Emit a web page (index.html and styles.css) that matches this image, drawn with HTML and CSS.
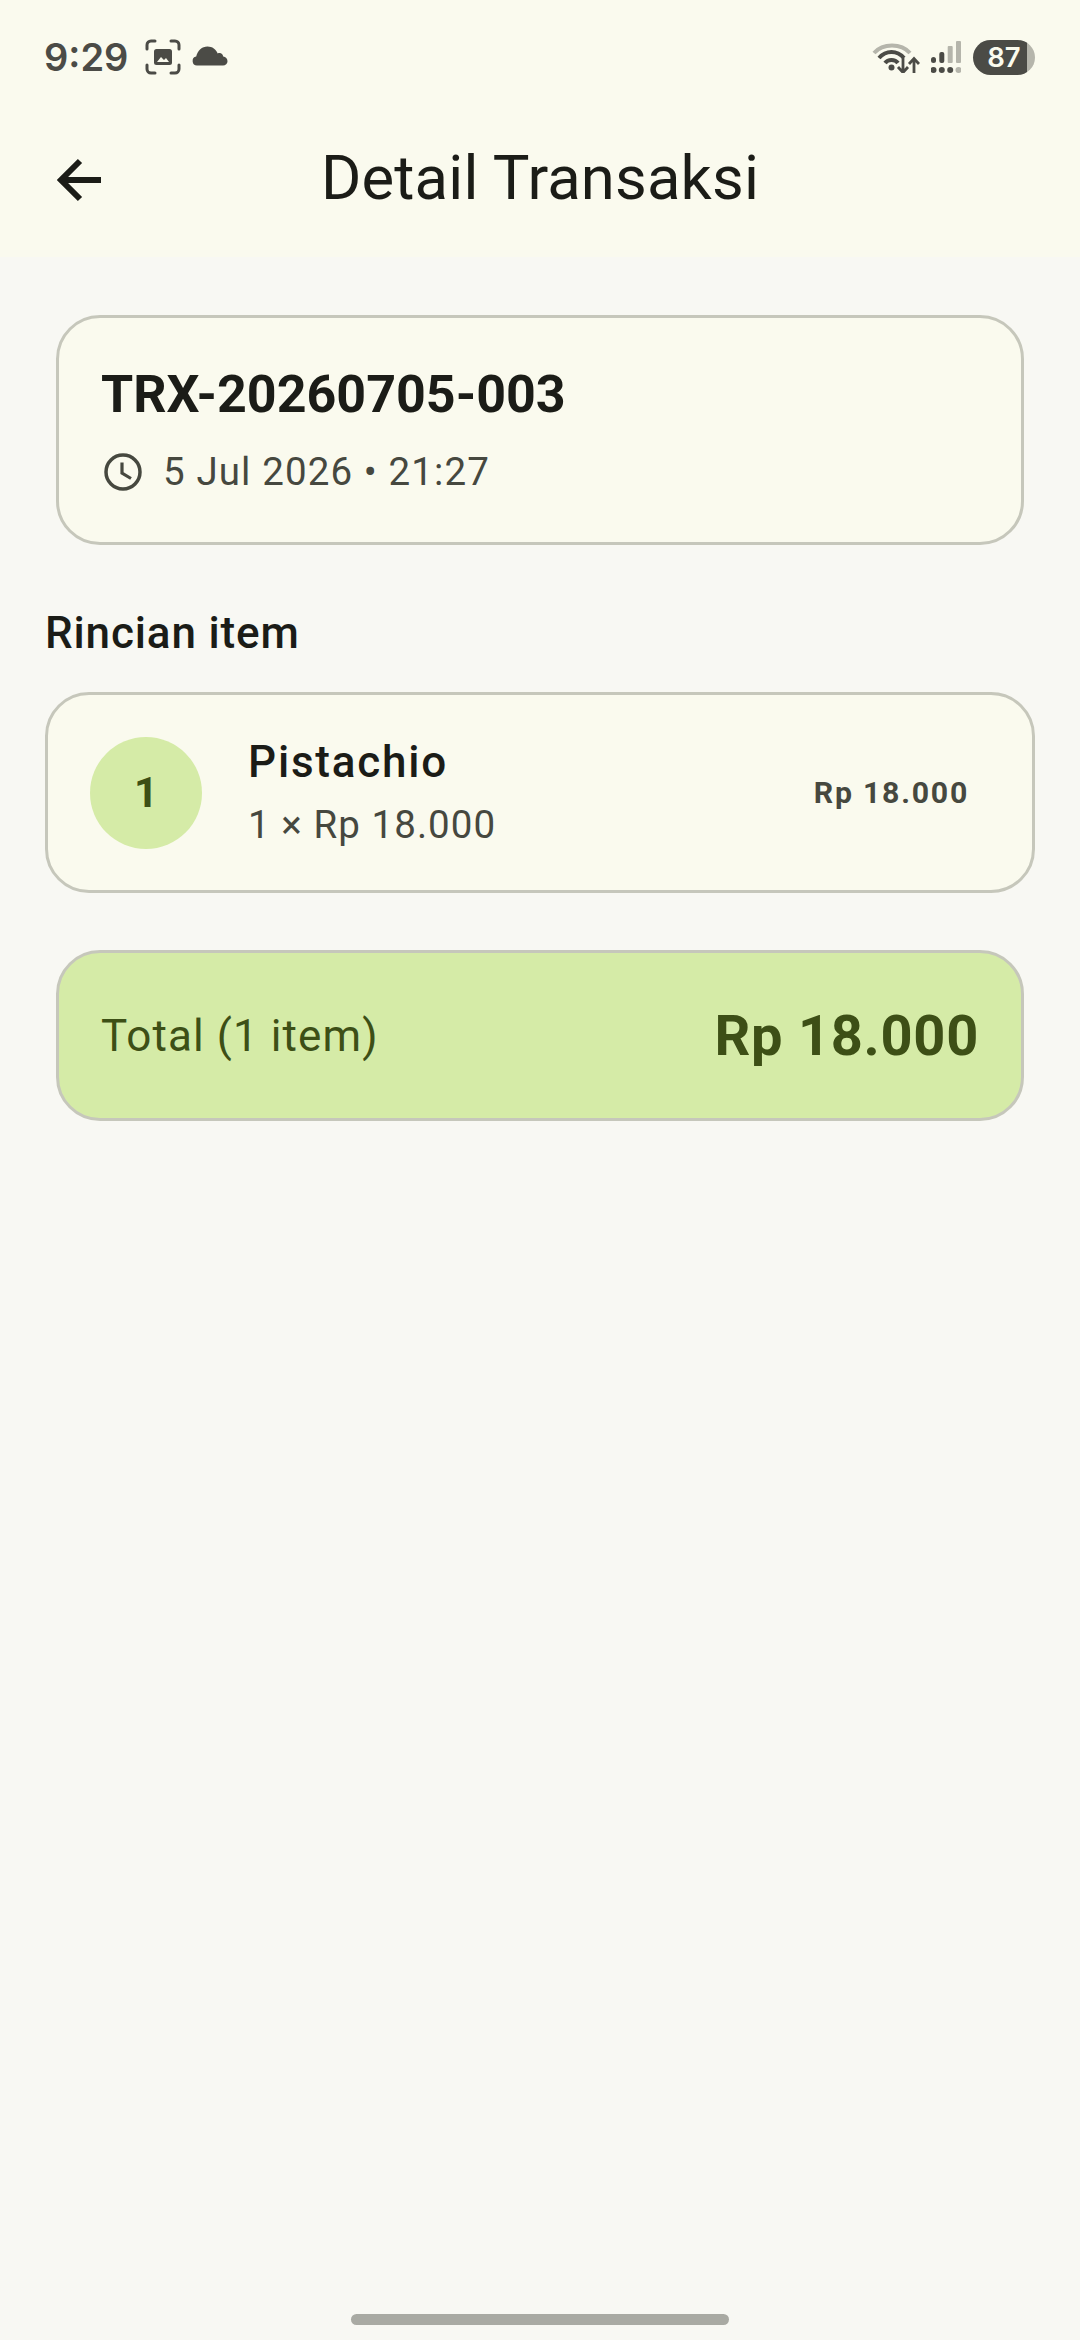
FILE: index.html
```html
<!DOCTYPE html>
<html lang="en">
<head>
  <meta charset="UTF-8" />
  <meta name="viewport" content="width=device-width, initial-scale=1.0"/>
  <title>Detail Transaksi</title>
  <link rel="stylesheet" href="styles.css">
</head>
<body>
  <div class="top">
    <div class="status-bar">
      <div class="status-left">
        <span class="clock">9:29</span>
        <svg class="ic-shot" viewBox="0 0 36 36" width="36" height="36">
          <path d="M2 10V6a4 4 0 0 1 4-4h4M26 2h4a4 4 0 0 1 4 4v4M34 26v4a4 4 0 0 1-4 4h-4M10 34H6a4 4 0 0 1-4-4v-4" fill="none" stroke="#4b4b46" stroke-width="3" stroke-linecap="round"/>
          <rect x="9" y="10" width="18" height="16" rx="2.5" fill="#4b4b46"/>
          <path d="M12 23l4-5 3 3 2-2 3 4z" fill="#fafaee"/>
        </svg>
        <svg class="ic-cloud" viewBox="0 0 36 20" width="36" height="20">
          <path d="M5 19.500a4.500 4.500 0 0 1-.8-8.900C5.500 4.500 10 .5 15.500.5c4.800 0 8.600 2.800 10.200 7 1-.5 2-.5 3-.2 1.500.5 2.300 1.700 2.500 3.200 2.500.4 4.300 2.300 4.300 4.700 0 2.500-2 4.300-4.500 4.300z" fill="#4b4b46"/>
        </svg>
      </div>
      <div class="status-right">
        <svg class="ic-wifi" viewBox="0 0 48 31" width="48" height="31">
          <path d="M2 11C11 1 29 1 38 11" fill="none" stroke="#b5b5ab" stroke-width="4"/>
          <path d="M7 16C14 8 25 8 32 16" fill="none" stroke="#4b4b46" stroke-width="4"/>
          <path d="M13 21C16 17 23 17 26 21" fill="none" stroke="#4b4b46" stroke-width="4"/>
          <circle cx="19.500" cy="25.500" r="3" fill="#4b4b46"/>
          <path d="M31 16v14M26 25l5 5.500 5-5.500M42 31V17M37 22l5-5.500 5 5.500" fill="none" stroke="#4b4b46" stroke-width="2.800"/>
        </svg>
        <svg class="ic-signal" viewBox="0 0 30 33" width="30" height="33">
          <rect x="0" y="16" width="5" height="6" rx="2.500" fill="#4b4b46"/>
          <rect x="8.300" y="11" width="5" height="11" rx="2" fill="#4b4b46"/>
          <rect x="16.700" y="5" width="5" height="17" rx="1" fill="#b5b5ab"/>
          <rect x="25" y="0" width="5" height="22" rx="1" fill="#b5b5ab"/>
          <circle cx="2.500" cy="29" r="3" fill="#4b4b46"/>
          <circle cx="10.800" cy="29" r="3" fill="#4b4b46"/>
          <circle cx="19.200" cy="29" r="3" fill="#4b4b46"/>
          <circle cx="27.500" cy="29" r="3" fill="#b5b5ab"/>
        </svg>
        <div class="battery"><span class="battery-num">87</span></div>
      </div>
    </div>
    <div class="app-bar">
      <svg class="ic-back" viewBox="0 0 46 46" width="46" height="46">
        <path d="M45 23H5M24 4L5 23l19 19" fill="none" stroke="#1b1c17" stroke-width="6"/>
      </svg>
      <h1 class="title">Detail Transaksi</h1>
    </div>
  </div>

  <div class="content">
    <div class="card head-card">
      <div class="trx-id">TRX-20260705-003</div>
      <div class="trx-date">
        <svg class="ic-clock" viewBox="0 0 40 40" width="40" height="40">
          <circle cx="20" cy="20" r="17" fill="none" stroke="#46483f" stroke-width="3.500"/>
          <path d="M19 10.500v10.500l9 5.500" fill="none" stroke="#46483f" stroke-width="3.200"/>
        </svg>
        <span>5 Jul 2026 • 21:27</span>
      </div>
    </div>

    <div class="section-title">Rincian item</div>

    <div class="card item-card">
      <div class="qty-circle">1</div>
      <div class="item-info">
        <div class="item-name">Pistachio</div>
        <div class="item-sub">1 × Rp 18.000</div>
      </div>
      <div class="item-price">Rp 18.000</div>
    </div>

    <div class="card total-card">
      <span class="total-label">Total (1 item)</span>
      <span class="total-value">Rp 18.000</span>
    </div>
  </div>

  <div class="home-wrap"><div class="home-bar"></div></div>
</body>
</html>
```

FILE: styles.css
```css
html, body {
  height: 100%;
}

body {
  margin: 0;
  min-height: 2340px;
  background-color: #f8f8f3;
  color: #1b1c17;
  font-family: Roboto, "Liberation Sans", sans-serif;
  display: flex;
  flex-direction: column;
}

.top {
  background-color: #fafaee;
  height: 257px;
  flex-shrink: 0;
}

.status-bar {
  display: flex;
  justify-content: space-between;
  align-items: center;
  height: 38px;
  padding: 38px 45px 0 44px;
  color: #4b4b46;
}

.status-left, .status-right {
  display: flex;
  align-items: center;
}

.clock {
  font-family: Inter, Roboto, sans-serif;
  font-size: 38px;
  font-weight: 600;
  margin-right: 17px;
}

.ic-cloud {
  margin-left: 11px;
  margin-top: -2px;
}

.ic-wifi {
  margin-right: 11px;
}

.ic-signal {
  margin-right: 12px;
}

.battery {
  width: 62px;
  height: 35px;
  border-radius: 18px;
  background: linear-gradient(to right, #4b4b46 54px, #b5b5ab 54px);
  color: #fafaee;
  display: flex;
  align-items: center;
  justify-content: center;
}

.battery-num {
  font-family: Inter, Roboto, sans-serif;
  font-size: 27.500px;
  font-weight: 600;
}

.app-bar {
  display: grid;
  grid-template-columns: 1fr auto 1fr;
  align-items: center;
  height: 66px;
  margin-top: 69px;
  padding-left: 56px;
  padding-right: 56px;
}

.ic-back {
  margin-top: 4px;
}

.title {
  margin: 0;
  font-size: 61.600px;
  font-weight: 400;
  line-height: 66px;
  letter-spacing: 0.15px;
}

.content {
  padding: 58px 45px 0 45px;
  flex: 1;
}

.card {
  box-sizing: border-box;
  background-color: #fafaee;
  border: 3px solid #c6c7bb;
  border-radius: 44px;
}

.head-card {
  margin: 0 11px;
  height: 230px;
  padding: 47px 42px 0 42px;
}

.trx-id {
  font-size: 52px;
  font-weight: 700;
  line-height: 60px;
}

.trx-date {
  display: flex;
  align-items: center;
  gap: 20px;
  margin-top: 22px;
  color: #46483f;
  font-size: 38.500px;
  letter-spacing: 1.100px;
  line-height: 50px;
}

.ic-clock {
  margin-left: 2px;
}

.section-title {
  font-size: 44px;
  font-weight: 500;
  line-height: 56px;
  letter-spacing: 0.85px;
  margin-top: 60px;
  margin-bottom: 31px;
}

.item-card {
  display: flex;
  align-items: center;
  height: 201px;
  padding: 0 63px 0 42px;
}

.qty-circle {
  width: 112px;
  height: 112px;
  border-radius: 50%;
  background-color: #d5eba7;
  color: #3d4f16;
  font-size: 42px;
  font-weight: 700;
  display: flex;
  align-items: center;
  justify-content: center;
  flex-shrink: 0;
}

.item-info {
  flex: 1;
  margin-left: 46px;
}

.item-name {
  font-size: 44px;
  font-weight: 500;
  line-height: 56px;
  letter-spacing: 1.800px;
  margin-top: -2px;
}

.item-sub {
  font-size: 38.500px;
  line-height: 50px;
  margin-top: 10px;
  color: #46483f;
  letter-spacing: 1.050px;
}

.item-price {
  font-size: 30.250px;
  font-weight: 700;
  letter-spacing: 1.750px;
  color: #46483f;
}

.total-card {
  margin: 57px 11px 0 11px;
  height: 171px;
  padding: 0 42px;
  background-color: #d5eba7;
  display: flex;
  align-items: center;
  justify-content: space-between;
  color: #3d4f16;
}

.total-label {
  font-size: 44px;
  letter-spacing: 1.100px;
}

.total-value {
  font-size: 56px;
  font-weight: 700;
  letter-spacing: 0.7px;
}

.home-wrap {
  display: flex;
  justify-content: center;
  padding-bottom: 15px;
}

.home-bar {
  width: 378px;
  height: 11px;
  border-radius: 6px;
  background-color: #a9aaa3;
}
```
